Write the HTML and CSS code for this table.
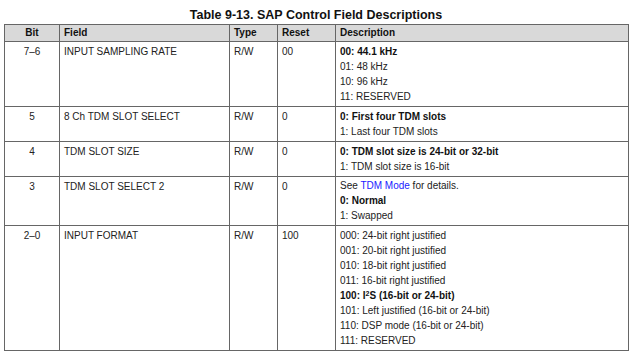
FILE: index.html
```html
<!DOCTYPE html>
<html>
<head>
<meta charset="utf-8">
<link rel="stylesheet" href="styles.css">
</head>
<body>
<div class="page">
  <div class="title">Table 9-13. SAP Control Field Descriptions</div>
  <table class="regs">
    <colgroup>
      <col class="c-bit"><col class="c-field"><col class="c-type"><col class="c-reset"><col class="c-desc">
    </colgroup>
    <thead>
      <tr><th class="center">Bit</th><th>Field</th><th>Type</th><th>Reset</th><th>Description</th></tr>
    </thead>
    <tbody>
      <tr>
        <td class="center">7–6</td><td>INPUT SAMPLING RATE</td><td>R/W</td><td>00</td>
        <td><div class="b">00: 44.1 kHz</div><div>01: 48 kHz</div><div>10: 96 kHz</div><div>11: RESERVED</div></td>
      </tr>
      <tr>
        <td class="center">5</td><td>8 Ch TDM SLOT SELECT</td><td>R/W</td><td>0</td>
        <td><div class="b">0: First four TDM slots</div><div>1: Last four TDM slots</div></td>
      </tr>
      <tr>
        <td class="center">4</td><td>TDM SLOT SIZE</td><td>R/W</td><td>0</td>
        <td><div class="b">0: TDM slot size is 24-bit or 32-bit</div><div>1: TDM slot size is 16-bit</div></td>
      </tr>
      <tr>
        <td class="center">3</td><td>TDM SLOT SELECT 2</td><td>R/W</td><td>0</td>
        <td><div class="first">See <span class="link">TDM Mode</span> for details.</div><div class="b">0: Normal</div><div>1: Swapped</div></td>
      </tr>
      <tr>
        <td class="center">2–0</td><td>INPUT FORMAT</td><td>R/W</td><td>100</td>
        <td>
          <div>000: 24-bit right justified</div>
          <div>001: 20-bit right justified</div>
          <div>010: 18-bit right justified</div>
          <div>011: 16-bit right justified</div>
          <div class="b">100: I<sup>2</sup>S (16-bit or 24-bit)</div>
          <div>101: Left justified (16-bit or 24-bit)</div>
          <div>110: DSP mode (16-bit or 24-bit)</div>
          <div>111: RESERVED</div>
        </td>
      </tr>
    </tbody>
  </table>
</div>
</body>
</html>
```

FILE: styles.css
```css
html, body {
  margin: 0;
  padding: 0;
  background: #ffffff;
}
.page {
  padding-left: 4px;
  font-family: "Liberation Sans", Arial, sans-serif;
  color: #222;
}
.title {
  width: 624px;
  text-align: center;
  font-weight: bold;
  font-size: 12.5px;
  line-height: 15px;
  padding-top: 8px;
  margin-bottom: 1px;
  color: #111;
}
.regs {
  border-collapse: collapse;
  width: 624px;
  table-layout: fixed;
  font-size: 10px;
  border: 1px solid #666;
}
.c-bit { width: 55px; }
.c-field { width: 170px; }
.c-type { width: 48px; }
.c-reset { width: 58px; }
.c-desc { width: 293px; }
.regs th {
  background: #d9d9d9;
  font-weight: bold;
  text-align: left;
  height: 16px;
  line-height: 16px;
  padding: 0 4px;
  border: 1px solid #666;
  color: #111;
}
.regs td {
  vertical-align: top;
  padding: 2px 4px 2px 4px;
  line-height: 15px;
  border: 1px solid #666;
}
.regs .center { text-align: center; }
.first { line-height: 13px; margin-bottom: 1px; }
.b { font-weight: bold; color: #111; }
.link { color: #1a1aff; }
sup {
  font-size: 7px;
  line-height: 0;
  vertical-align: 3px;
}
```
